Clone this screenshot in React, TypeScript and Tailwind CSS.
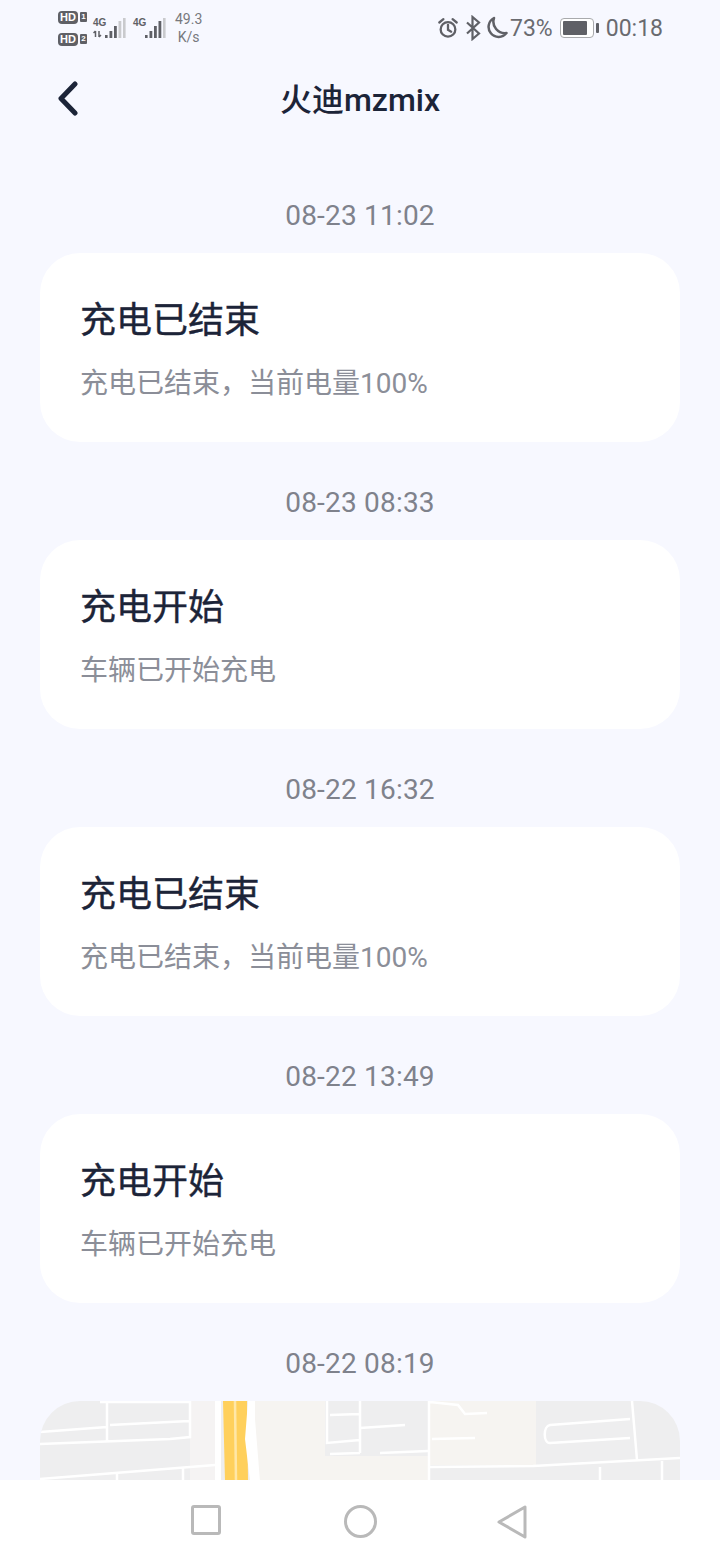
import { Fragment } from "react"

const messages = [
  { time: "08-23 11:02", title: "充电已结束", body: "充电已结束，当前电量100%" },
  { time: "08-23 08:33", title: "充电开始", body: "车辆已开始充电" },
  { time: "08-22 16:32", title: "充电已结束", body: "充电已结束，当前电量100%" },
  { time: "08-22 13:49", title: "充电开始", body: "车辆已开始充电" },
]

const font = "font-['Roboto','Noto_Sans_CJK_SC',sans-serif]"

function SimBadge({ n }: { n: string }) {
  return (
    <div className="flex items-center gap-[2px]">
      <span className="flex h-[13px] w-[20px] items-center justify-center rounded-[4px] bg-[#5f6066] font-['Liberation_Sans',sans-serif] text-[11px] font-bold leading-none text-white">
        HD
      </span>
      <span className="flex h-[10px] w-[7px] items-center justify-center rounded-[1px] bg-[#5f6066] font-['Liberation_Sans',sans-serif] text-[8px] font-bold leading-none text-white">
        {n}
      </span>
    </div>
  )
}

function Signal({ arrows }: { arrows?: boolean }) {
  return (
    <div className="relative h-[20px] w-[33px]">
      <span className="absolute left-0 top-0 font-['Liberation_Sans',sans-serif] text-[10px] font-bold leading-[10px] text-[#5f6066]">4G</span>
      <svg className="absolute inset-0" width="33" height="20" viewBox="0 0 33 20">
        {arrows && <path d="M2.500 13v6M0.500 15l2-2M6 13v6M6 19l2-2" stroke="#5f6066" strokeWidth="1.500" fill="none" />}
        <rect x="12" y="17" width="2.600" height="3" fill="#5f6066" />
        <rect x="16.500" y="13" width="2.800" height="7" fill="#5f6066" />
        <rect x="21" y="8" width="2.800" height="12" fill="#5f6066" />
        <rect x="25.500" y="3" width="2.800" height="17" fill={arrows ? "#c9cacd" : "#5f6066"} />
        <rect x="30" y="0" width="2.600" height="20" fill="#c9cacd" />
      </svg>
    </div>
  )
}

function StatusBar() {
  return (
    <div className="flex h-[54px] shrink-0 items-center justify-between pl-[58px] pr-[57px] pt-[2px]">
      <div className="flex items-center">
        <div className="flex flex-col gap-[9px]">
          <SimBadge n="1" />
          <SimBadge n="2" />
        </div>
        <div className="ml-[6px] flex items-center gap-[7px]">
          <Signal arrows />
          <Signal />
        </div>
        <div className="ml-[9px] flex flex-col items-center text-[14px] leading-[18px] text-[#77787d]">
          <span>49.3</span>
          <span>K/s</span>
        </div>
      </div>
      <div className="flex items-center text-[23px] leading-none text-[#6a6b70]">
        <svg width="22" height="24" viewBox="0 0 24 24" fill="none" stroke="#5f6066" strokeWidth="2.500" strokeLinecap="round" className="mr-[6px]">
          <circle cx="12" cy="13.500" r="8" />
          <path d="M12 8.500v5.500l3.500 2M2.500 6l4.500-3.700M21.500 6L17 2.300" />
        </svg>
        <svg width="16" height="26" viewBox="0 0 16 26" fill="none" stroke="#5f6066" strokeWidth="2.200" className="mr-[4px]">
          <path d="M2 7.500l12 11-6.500 5.500V2L14 7.500 2 18.500" />
        </svg>
        <svg width="23" height="24" viewBox="0 0 23 24" fill="none" stroke="#5f6066" strokeWidth="2.500" strokeLinejoin="round" className="mr-[2px]">
          <path d="M9 2a10 10 0 1 0 12.500 15A11.500 11.500 0 0 1 9 2z" />
        </svg>
        <span>73%</span>
        <div className="ml-[7px] flex items-center">
          <div className="flex h-[20px] w-[34px] items-center rounded-[4px] border border-[#a9aaad] bg-white p-[2px]">
            <div className="h-full w-[24px] rounded-[1px] bg-[#5f6066]" />
          </div>
          <div className="ml-[2px] h-[10px] w-[3px] rounded-[1px] bg-[#5f6066]" />
        </div>
        <span className="ml-[7px]">00:18</span>
      </div>
    </div>
  )
}

function MapPreview() {
  return (
    <svg width="640" height="80" viewBox="0 0 640 80" className="block">
      <rect width="640" height="80" fill="#eeeeef" />
      <rect x="150" width="25" height="80" fill="#f5f3f3" />
      <rect x="215" width="70" height="80" fill="#f6f4f1" />
      <rect x="285" y="55" width="105" height="25" fill="#f6f4f1" />
      <rect x="390" width="106" height="64" fill="#f6f4f1" />
      <g fill="none" stroke="#ffffff" strokeWidth="2.500">
        <path d="M60 1H150V36L130 38L0 43M0 31L67 26M67 0V40M70 24L149 20M0 78L175 64M77 71V80M143 67V80" />
        <path d="M178 0V80" strokeWidth="6" />
        <path d="M287 0V42L320 39M290 14L320 13M290 53L320 52M320 0V52M320 27L365 24M340 52L388 50" />
        <path d="M389 0V80M390 1L418 4L425 13L447 12M392 38L435 37M390 66L493 65L640 57M560 66V80M622 60V80" />
        <path d="M592 0L597 59M590 18L510 24C503 25 503 42 510 42L590 37" />
      </g>
      <path d="M183 0H207L208 80H185z" fill="#ffd05c" />
      <path d="M195 0L196 80" stroke="#ffe7a8" strokeWidth="2.500" />
      <path d="M208 0H215V18L220 80H210L205 38z" fill="#ffffff" />
    </svg>
  )
}

function NavBar() {
  return (
    <div className="absolute inset-x-0 bottom-0 flex h-[80px] items-start justify-center bg-white pr-[2px] pt-[25px]">
      <div className="h-[30px] w-[30px] rounded-[3px] border-[3px] border-[#b9b9b9]" />
      <div className="ml-[123px] h-[33px] w-[33px] rounded-full border-[3px] border-[#b9b9b9]" />
      <svg width="32" height="34" viewBox="0 0 32 34" fill="none" stroke="#b9b9b9" strokeWidth="3" strokeLinejoin="round" className="ml-[119px]">
        <path d="M29 2V32L3 17z" />
      </svg>
    </div>
  )
}

export default function App() {
  return (
    <div className={`relative flex h-[1560px] w-[720px] flex-col overflow-hidden bg-[#f7f8ff] ${font}`}>
      <StatusBar />
      <div className="relative flex h-[92px] shrink-0 items-center justify-center">
        <svg width="24" height="36" viewBox="0 0 24 36" fill="none" stroke="#1c2438" strokeWidth="5" strokeLinecap="round" strokeLinejoin="round" className="absolute left-[56px] top-[27px]">
          <path d="M19 3L5 17.500l14 14.500" />
        </svg>
        <h1 className="text-[32px] font-medium leading-none text-[#1c2438]">火迪mzmix</h1>
      </div>
      <div className="flex flex-col items-center">
        {messages.map((m) => (
          <Fragment key={m.time}>
            <div className="flex h-[107px] items-center pt-[32px] text-[28px] leading-none tracking-[0.2px] text-[#7f828c]">
              {m.time}
            </div>
            <div className="mb-[-9px] flex h-[189px] w-[640px] flex-col rounded-[40px] bg-white pl-[40px] pt-[47px]">
              <div className="text-[36px] leading-[42px] text-[#1c2438] [-webkit-text-stroke:0.4px_#1c2438]">{m.title}</div>
              <div className="mt-[26px] text-[28px] leading-[31px] text-[#8b8e98]">{m.body}</div>
            </div>
          </Fragment>
        ))}
        <div className="flex h-[107px] items-center pt-[32px] text-[28px] leading-none tracking-[0.2px] text-[#7f828c]">08-22 08:19</div>
        <div className="w-[640px] overflow-hidden rounded-t-[40px]">
          <MapPreview />
        </div>
      </div>
      <NavBar />
    </div>
  )
}
